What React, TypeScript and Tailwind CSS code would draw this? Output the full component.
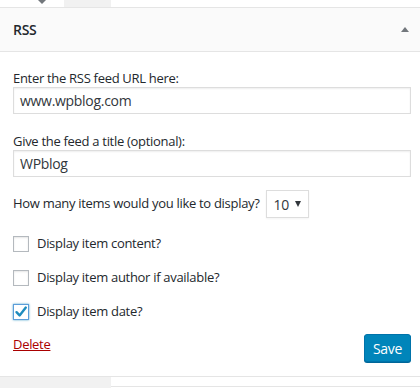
import React from "react";

export default function App() {
  const font = { fontFamily: '"Open Sans", "Noto Sans", sans-serif' };
  return (
    <div className="w-[420px] h-[389px] bg-white overflow-hidden text-[13px] tracking-[-0.3px] text-[#23282d]" style={font}>
      {/* top strip */}
      <div className="flex h-[7px]">
        <div className="w-[64px] bg-white relative">
          <div className="absolute left-[38px] top-0 w-0 h-0 border-l-[4px] border-r-[4px] border-t-[4px] border-l-transparent border-r-transparent border-t-[#72777c]" />
        </div>
        <div className="w-[47px] bg-[#f1f1f1]" />
        <div className="flex-1 bg-white" />
      </div>
      {/* widget */}
      <div className="border-t border-b border-[#e5e5e5] bg-white">
        <div className="h-[44px] bg-[#fafafa] border-b border-[#e5e5e5] flex items-center justify-between pl-[13px] pr-[11px]">
          <span className="text-[14px] font-semibold text-[#23282d]">RSS</span>
          <div className="w-0 h-0 border-l-[4px] border-r-[4px] border-b-[5px] border-l-transparent border-r-transparent border-b-[#72777c]" />
        </div>
        <div className="px-[13px] pr-[9px] pt-[17px] pb-[14px] flex flex-col">
          <label className="leading-[18px]">Enter the RSS feed URL here:</label>
          <div className="h-[27px] border border-[#dddddd] flex items-center pl-[6px] text-[14px] text-[#32373c] shadow-[inset_0_1px_2px_rgba(0,0,0,0.07)]">
            www.wpblog.com
          </div>
          <label className="leading-[18px] mt-[18px]">Give the feed a title (optional):</label>
          <div className="h-[27px] border border-[#dddddd] flex items-center pl-[6px] text-[14px] text-[#32373c] shadow-[inset_0_1px_2px_rgba(0,0,0,0.07)]">
            WPblog
          </div>
          <div className="mt-[13px] flex items-center gap-[6px]">
            <span>How many items would you like to display?</span>
            <div className="w-[43px] h-[28px] border border-[#dddddd] flex items-center pl-[7px] pr-[7px] justify-between text-[14px] text-[#32373c] shadow-[0_1px_2px_rgba(0,0,0,0.05)]">
              <span>10</span>
              <div className="w-0 h-0 border-l-[3.5px] border-r-[3.5px] border-t-[6px] border-l-transparent border-r-transparent border-t-[#32373c]" />
            </div>
          </div>
          <div className="mt-[18px] flex items-center gap-[8px] h-[16px]">
            <div className="w-[16px] h-[16px] border border-[#b4b9be] shadow-[inset_0_1px_2px_rgba(0,0,0,0.1)]" />
            <span>Display item content?</span>
          </div>
          <div className="mt-[18px] flex items-center gap-[8px] h-[16px]">
            <div className="w-[16px] h-[16px] border border-[#b4b9be] shadow-[inset_0_1px_2px_rgba(0,0,0,0.1)]" />
            <span>Display item author if available?</span>
          </div>
          <div className="mt-[18px] flex items-center gap-[8px] h-[16px]">
            <div className="w-[16px] h-[16px] border border-[#5b9dd9] shadow-[0_0_2px_rgba(30,140,190,0.8)] flex items-center justify-center">
              <svg width="14" height="14" viewBox="0 0 14 14">
                <path d="M2.5 7.2 L5.6 10.4 L11.8 2.6" fill="none" stroke="#1e8cbe" strokeWidth="2.4" strokeLinecap="round" strokeLinejoin="round" />
              </svg>
            </div>
            <span>Display item date?</span>
          </div>
          <div className="mt-[14px] flex items-start justify-between">
            <a className="text-[#a00] underline mt-[1px] leading-[18px]">Delete</a>
            <button className="h-[28px] px-[8px] bg-[#0085ba] border border-[#0073aa] rounded-[3px] text-white text-[14px] shadow-[0_1px_0_#006799]">
              Save
            </button>
          </div>
        </div>
      </div>
      {/* bottom strip */}
      <div className="flex h-[11px]">
        <div className="w-[111px] bg-[#f1f1f1]" />
        <div className="flex-1 bg-white border-b border-[#e5e5e5] mb-[1px]" />
      </div>
    </div>
  );
}
